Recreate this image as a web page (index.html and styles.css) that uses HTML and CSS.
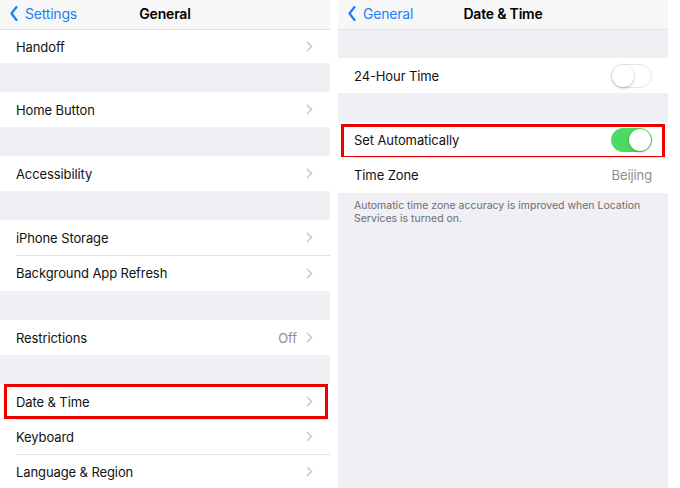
FILE: index.html
```html
<!DOCTYPE html>
<html lang="en">
<head>
<meta charset="UTF-8" />
<meta name="viewport" content="width=device-width, initial-scale=1" />
<title>General / Date &amp; Time</title>
<link rel="stylesheet" href="styles.css">
</head>
<body>

<div class="screen">
  <div class="nav">
    <a class="back"><svg width="8" height="15" viewBox="0 0 8 15"><polyline points="6.5,1 1.5,7.5 6.5,14" fill="none" stroke="#1b7ff6" stroke-width="2.2" stroke-linecap="round" stroke-linejoin="round"/></svg>Settings</a>
    <span class="title">General</span>
  </div>

  <div class="group top">
    <div class="row short">Handoff<svg class="chev" width="7" height="11" viewBox="0 0 7 11"><polyline points="1,1 5.5,5.5 1,10"/></svg></div>
  </div>
  <div class="group">
    <div class="row">Home Button<svg class="chev" width="7" height="11" viewBox="0 0 7 11"><polyline points="1,1 5.5,5.5 1,10"/></svg></div>
  </div>
  <div class="group">
    <div class="row">Accessibility<svg class="chev" width="7" height="11" viewBox="0 0 7 11"><polyline points="1,1 5.5,5.5 1,10"/></svg></div>
  </div>
  <div class="group">
    <div class="row">iPhone Storage<svg class="chev" width="7" height="11" viewBox="0 0 7 11"><polyline points="1,1 5.5,5.5 1,10"/></svg></div>
    <div class="row tall">Background App Refresh<svg class="chev" width="7" height="11" viewBox="0 0 7 11"><polyline points="1,1 5.5,5.5 1,10"/></svg></div>
  </div>
  <div class="group">
    <div class="row">Restrictions<span class="value">Off</span><svg class="chev" width="7" height="11" viewBox="0 0 7 11"><polyline points="1,1 5.5,5.5 1,10"/></svg></div>
  </div>
  <div class="group">
    <div class="row hl hl-left">Date &amp; Time<svg class="chev" width="7" height="11" viewBox="0 0 7 11"><polyline points="1,1 5.5,5.5 1,10"/></svg></div>
    <div class="row">Keyboard<svg class="chev" width="7" height="11" viewBox="0 0 7 11"><polyline points="1,1 5.5,5.5 1,10"/></svg></div>
    <div class="row">Language &amp; Region<svg class="chev" width="7" height="11" viewBox="0 0 7 11"><polyline points="1,1 5.5,5.5 1,10"/></svg></div>
  </div>
</div>

<div class="screen">
  <div class="nav">
    <a class="back"><svg width="8" height="15" viewBox="0 0 8 15"><polyline points="6.5,1 1.5,7.5 6.5,14" fill="none" stroke="#1b7ff6" stroke-width="2.2" stroke-linecap="round" stroke-linejoin="round"/></svg>General</a>
    <span class="title">Date &amp; Time</span>
  </div>

  <div class="group first">
    <div class="row">24-Hour Time<span class="switch"></span></div>
  </div>
  <div class="group">
    <div class="row hl hl-right">Set Automatically<span class="switch on"></span></div>
    <div class="row tall">Time Zone<span class="value end">Beijing</span></div>
  </div>
  <p class="note">Automatic time zone accuracy is improved when Location<br>Services is turned on.</p>
</div>

</body>
</html>
```

FILE: styles.css
```css
html,body{margin:0; padding:0; background:#fff;}
body{display:flex; gap:8px; font-family:Inter,"Liberation Sans",sans-serif; color:#111; -webkit-font-smoothing:antialiased;}

.screen{width:330px; height:488px; overflow:hidden; background:#efeff4;}

.nav{height:27px; padding-bottom:2px; border-bottom:1px solid #e2e2e6; background:#f7f7f8; display:grid; grid-template-columns:1fr auto 1fr; align-items:center;}
.back{display:flex; align-items:center; gap:7px; padding-left:10px; color:#1b7ff6; font-size:14px; letter-spacing:-0.2px;}
.title{font-size:14px; font-weight:600; letter-spacing:-0.2px; color:#000;}

.group{margin-top:29px; background:#fff;}
.group.top{margin-top:0;}
.group.first{margin-top:28px;}

.row{height:35px; display:flex; align-items:center; padding:0 16px; font-size:13px; letter-spacing:-0.1px; position:relative;}
.row.short{height:33px;}
.row.tall{height:36px;}
.row + .row{background:linear-gradient(#e2e2e6,#e2e2e6) 16px 0 / 100% 1px no-repeat, #fff;}

.value{margin-left:auto; margin-right:9px; color:#8e8e93;}
.value.end{margin-right:0;}
.chev{margin-left:auto; margin-right:1px; fill:none; stroke:#c7c7cc; stroke-width:1.5;}
.value + .chev{margin-left:0;}

.switch{margin-left:auto; width:39px; height:22px; border:1.5px solid #e6e6ea; border-radius:13px; background:#fff; position:relative;}
.switch::after{content:""; position:absolute; top:0; left:0; width:22px; height:22px; border-radius:50%; background:#fff; box-shadow:0 1px 3px rgba(0,0,0,.28);}
.switch.on{background:#4cd964; border-color:#4cd964;}
.switch.on::after{left:auto; right:0;}

.hl::after{content:""; position:absolute; top:0; bottom:0; border:3px solid #ee0000;}
.hl-left::after{left:4px; right:2px;}
.hl-right::after{top:2px; bottom:-2px; left:3px; right:3px;}

.note{margin:0; padding:6px 16px 0; font-size:10.5px; line-height:13px; color:#6d6d72;}
```
